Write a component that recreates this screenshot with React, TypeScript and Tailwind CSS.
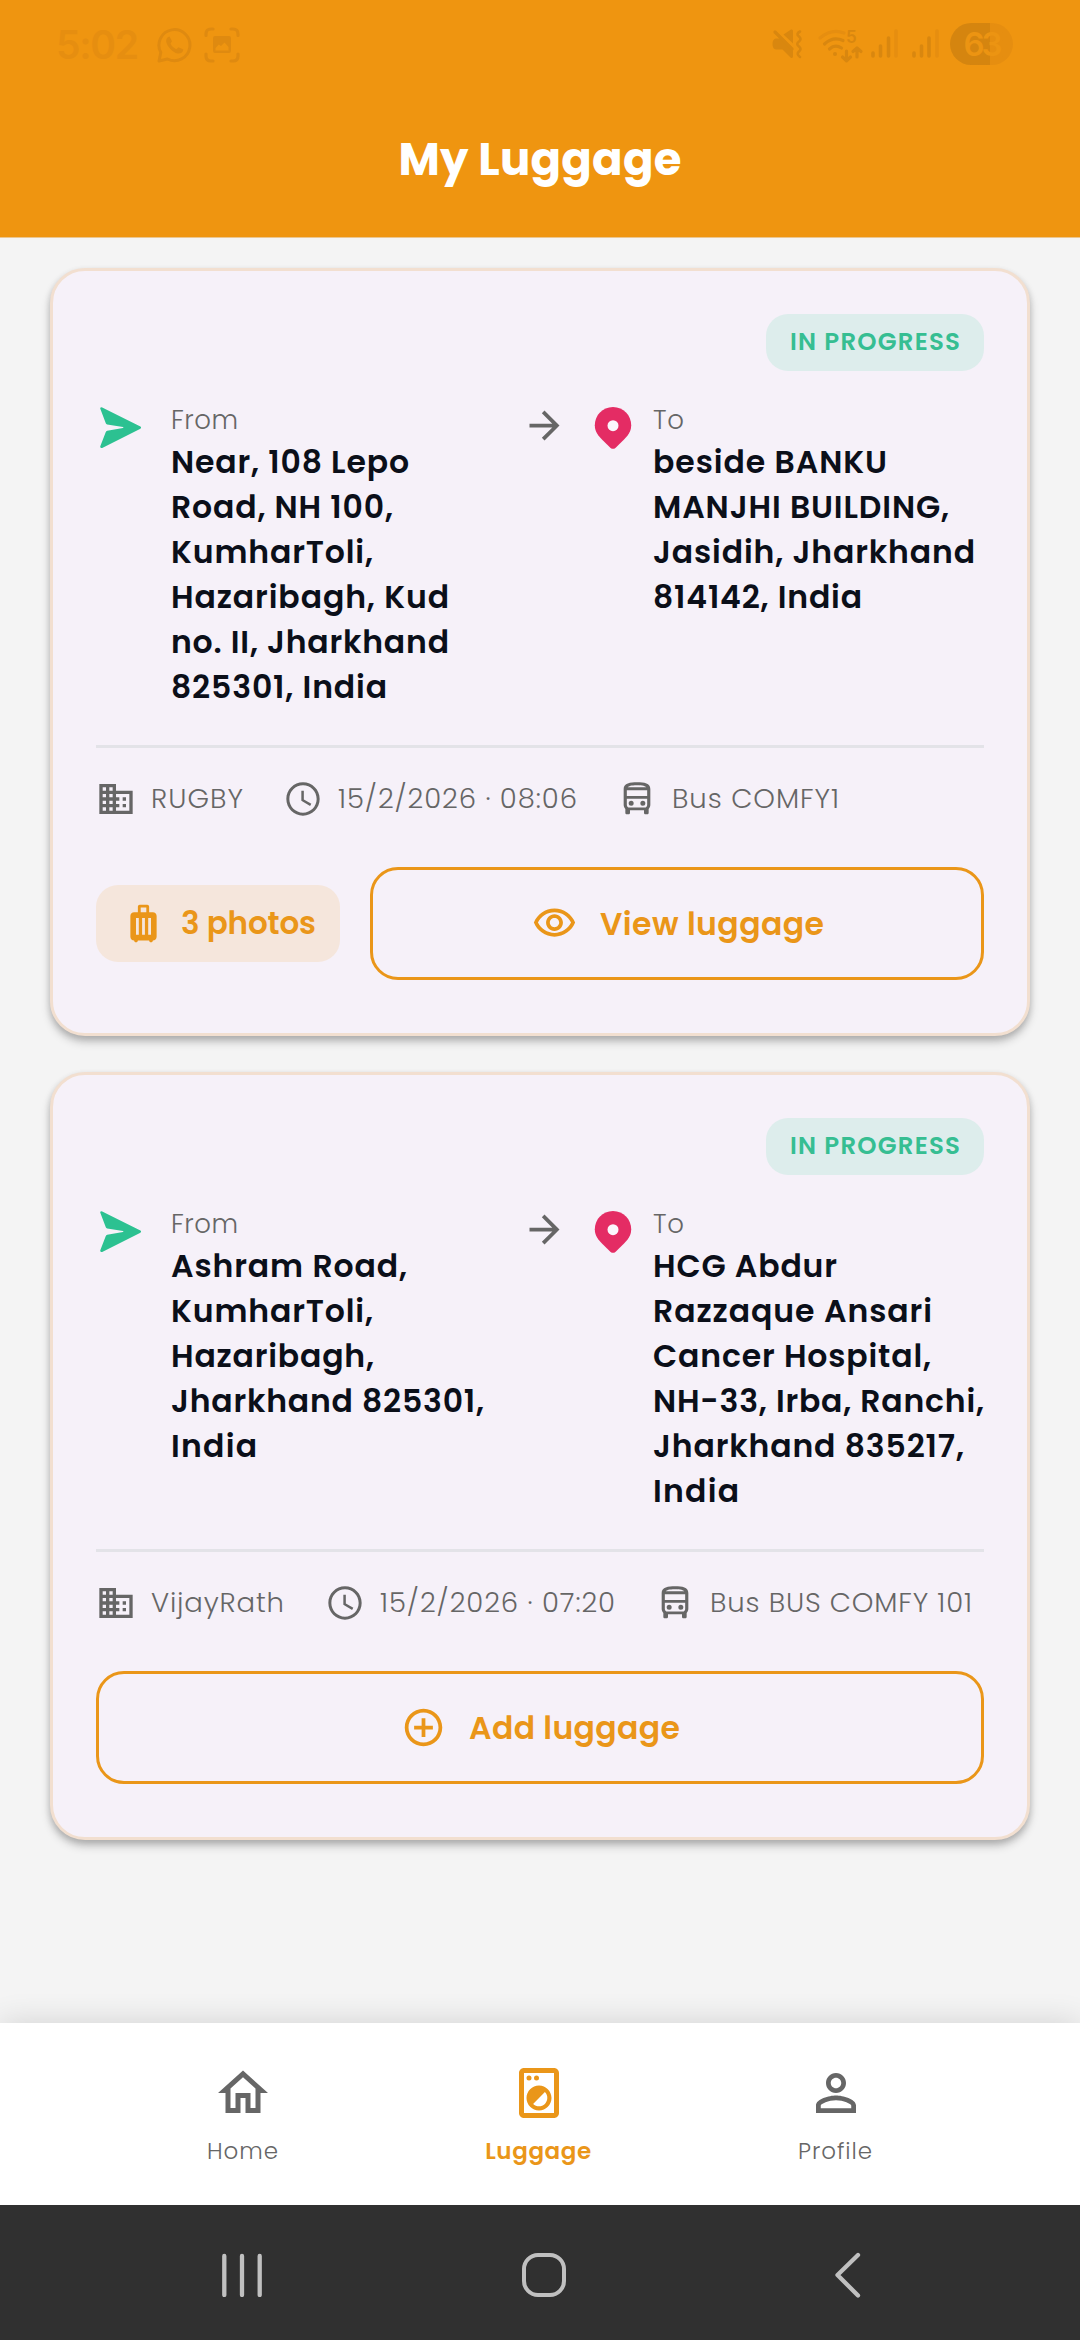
import { useLayoutEffect, useRef, useState } from "react";

/* Single line of text whose tracking is adjusted so that it spans the given width. */
function Fit({ text, width, className = "" }: { text: string; width: number; className?: string }) {
  const ref = useRef<HTMLSpanElement>(null);
  const [spacing, setSpacing] = useState(0);
  useLayoutEffect(() => {
    const el = ref.current;
    if (!el) return;
    const previous = el.style.letterSpacing;
    el.style.letterSpacing = "0px";
    const natural = el.getBoundingClientRect().width;
    el.style.letterSpacing = previous;
    setSpacing((width - natural) / (text.length - 1));
  }, [text, width]);
  return (
    <span className={`block ${className}`}>
      <span ref={ref} className="inline-block whitespace-nowrap" style={{ letterSpacing: `${spacing}px` }}>
        {text}
      </span>
    </span>
  );
}

function Icon({ d, className }: { d: string; className: string }) {
  return (
    <svg viewBox="0 0 24 24" fill="currentColor" className={`shrink-0 ${className}`}>
      <path d={d} />
    </svg>
  );
}

const icons = {
  business:
    "M12 7V3H2v18h20V7H12zM6 19H4v-2h2v2zm0-4H4v-2h2v2zm0-4H4V9h2v2zm0-4H4V5h2v2zm4 12H8v-2h2v2zm0-4H8v-2h2v2zm0-4H8V9h2v2zm0-4H8V5h2v2zm10 12h-8v-2h2v-2h-2v-2h2v-2h-2V9h8v10zm-2-8h-2v2h2v-2zm0 4h-2v2h2v-2z",
  clock:
    "M11.99 2C6.47 2 2 6.48 2 12s4.47 10 9.99 10C17.52 22 22 17.52 22 12S17.52 2 11.99 2zM12 20.200c-4.520 0-8.200-3.680-8.200-8.200S7.480 3.800 12 3.800s8.200 3.680 8.200 8.200-3.680 8.200-8.200 8.200zM12.500 7H11v6l5.250 3.150.750-1.230-4.500-2.670z",
  bus: "M12 2C8 2 4 2.500 4 6v9.500c0 .95.380 1.810 1 2.440V20.200c0 .6.400 1 1 1h.800c.6 0 1-.4 1-1V18.700h8.400v1.500c0 .6.400 1 1 1h.800c.6 0 1-.4 1-1v-2.260c.620-.63 1-1.490 1-2.440V6c0-3.500-3.580-4-8-4zm0 1.700c3.600 0 5 .5 5.600 1.300H6.400c.6-.8 2-1.300 5.600-1.300zM18.100 6.700v3.500H5.900V6.700h12.200zm0 8.700c0 1-.6 1.700-1.500 1.700H7.400c-.9 0-1.500-.7-1.500-1.700v-3.600h12.200v3.600zM8.500 13a1.500 1.500 0 1 0 0 3 1.500 1.500 0 0 0 0-3zm7 0a1.500 1.500 0 1 0 0 3 1.500 1.500 0 0 0 0-3z",
  luggage:
    "M17 6h-2V3c0-.55-.45-1-1-1h-4c-.55 0-1 .45-1 1v3H7c-1.1 0-2 .9-2 2v11c0 1.1.9 2 2 2 0 .55.45 1 1 1s1-.45 1-1h6c0 .55.45 1 1 1s1-.45 1-1c1.1 0 2-.9 2-2V8c0-1.1-.9-2-2-2zM9.500 18H8V9h1.500v9zm3.250 0h-1.500V9h1.500v9zm.750-12h-3V3.500h3V6zM16 18h-1.500V9H16v9z",
  eye: "M12 6c3.790 0 7.170 2.130 8.820 5.500C19.170 14.870 15.790 17 12 17s-7.170-2.130-8.820-5.500C4.830 8.130 8.210 6 12 6m0-2C7 4 2.730 7.110 1 11.500 2.730 15.890 7 19 12 19s9.270-3.110 11-7.500C21.270 7.110 17 4 12 4zm0 5c1.380 0 2.500 1.120 2.500 2.500S13.380 14 12 14s-2.500-1.120-2.500-2.500S10.620 9 12 9m0-2c-2.480 0-4.500 2.020-4.500 4.500S9.520 16 12 16s4.500-2.020 4.500-4.500S14.480 7 12 7z",
  add: "M13 7h-2v4H7v2h4v4h2v-4h4v-2h-4V7zm-1-5C6.480 2 2 6.480 2 12s4.480 10 10 10 10-4.480 10-10S17.520 2 12 2zm0 18c-4.410 0-8-3.590-8-8s3.590-8 8-8 8 3.590 8 8-3.590 8-8 8z",
  arrow: "M12 4l-1.410 1.410L16.170 11H4v2h12.170l-5.580 5.590L12 20l8-8z",
  home: "M12 5.690l5 4.500V18h-2v-6H9v6H7v-7.810l5-4.500M12 3L2 12h3v8h6v-6h2v6h6v-8h3L12 3z",
  laundry:
    "M18 2.010L6 2c-1.110 0-2 .89-2 2v16c0 1.110.89 2 2 2h12c1.110 0 2-.89 2-2V4c0-1.110-.89-1.990-2-1.990zM18 20L6 19.990V4h12v16zM8 5a1 1 0 1 0 0 2 1 1 0 0 0 0-2zm3 0a1 1 0 1 0 0 2 1 1 0 0 0 0-2zm1 14c2.760 0 5-2.240 5-5s-2.240-5-5-5-5 2.240-5 5 2.240 5 5 5zm2.360-7.360c1.300 1.300 1.300 3.420 0 4.720s-3.420 1.300-4.720 0l4.720-4.720z",
  person:
    "M12 5.900c1.160 0 2.100.94 2.100 2.100s-.94 2.100-2.100 2.100S9.900 9.160 9.900 8s.94-2.100 2.100-2.100m0 9c2.970 0 6.100 1.460 6.100 2.100v1.100H5.900V17c0-.64 3.130-2.100 6.100-2.100M12 4C9.790 4 8 5.790 8 8s1.790 4 4 4 4-1.790 4-4-1.790-4-4-4zm0 9c-2.670 0-8 1.340-8 4v3h16v-3c0-2.660-5.330-4-8-4z",
};

type Line = [string, number];

interface Trip {
  from: Line[];
  to: Line[];
  company: Line;
  time: Line;
  bus: Line;
  companyCell: string;
  timeCell: string;
  photos?: string;
}

const trips: Trip[] = [
  {
    from: [
      ["Near, 108 Lepo", 238],
      ["Road, NH 100,", 222],
      ["KumharToli,", 202],
      ["Hazaribagh, Kud", 278],
      ["no. II, Jharkhand", 278],
      ["825301, India", 216],
    ],
    to: [
      ["beside BANKU", 234],
      ["MANJHI BUILDING,", 296],
      ["Jasidih, Jharkhand", 322],
      ["814142, India", 209],
    ],
    company: ["RUGBY", 92],
    time: ["15/2/2026 · 08:06", 239],
    bus: ["Bus COMFY1", 167],
    companyCell: "w-[187px]",
    timeCell: "w-[334px]",
    photos: "3 photos",
  },
  {
    from: [
      ["Ashram Road,", 236],
      ["KumharToli,", 202],
      ["Hazaribagh,", 203],
      ["Jharkhand 825301,", 313],
      ["India", 86],
    ],
    to: [
      ["HCG Abdur", 184],
      ["Razzaque Ansari", 279],
      ["Cancer Hospital,", 278],
      ["NH-33, Irba, Ranchi,", 331],
      ["Jharkhand 835217,", 311],
      ["India", 86],
    ],
    company: ["VijayRath", 133],
    time: ["15/2/2026 · 07:20", 235],
    bus: ["Bus BUS COMFY 101", 262],
    companyCell: "w-[229px]",
    timeCell: "w-[330px]",
  },
];

function SendIcon() {
  return (
    <svg viewBox="0 0 42 42" className="mt-[7px] ml-1 h-[42px] w-[42px]" fill="#2CC191">
      <path d="M0.200 1.600Q0.400 -0.300 2.200 0.400L40.400 19.400Q41.800 20.600 40.400 21.700L2.200 41Q0.300 41.500 0.200 39.600L5.800 25Q6.100 24 7.200 23.800L23 21.100Q23.800 20.600 23 20.100L7.200 17.400Q6.100 17.200 5.800 16.200Z" />
    </svg>
  );
}

function PinIcon() {
  return (
    <svg viewBox="0 0 38 42" className="mt-[7px] ml-px h-[42px] w-[38px]">
      <path
        d="M19 0C8.500 0 .8 8.300 .8 18.300C.8 25 4.500 29 8.200 32.800L16.600 40.900Q19 42.700 21.400 40.900L29.800 32.800C33.500 29 37.200 25 37.200 18.300C37.200 8.300 29.500 0 19 0Z"
        fill="#E42C64"
      />
      <circle cx="19" cy="18.700" r="5.500" fill="#FBF6FC" />
    </svg>
  );
}

function Place({ label, labelWidth, lines, className }: { label: string; labelWidth: number; lines: Line[]; className: string }) {
  return (
    <div className={`pt-px ${className}`}>
      <Fit text={label} width={labelWidth} className="h-[39px] text-[26px] leading-[39px] font-light text-[#666666]" />
      {lines.map(([text, width]) => (
        <Fit key={text} text={text} width={width} className="h-[45px] text-[31.500px] leading-[45px] font-semibold text-[#0B0F19]" />
      ))}
    </div>
  );
}

function Meta({ icon, line, className = "" }: { icon: string; line: Line; className?: string }) {
  return (
    <div className={`flex h-10 items-center gap-[15px] text-[#666666] ${className}`}>
      <Icon d={icon} className="h-10 w-10" />
      <Fit text={line[0]} width={line[1]} className="text-[27.500px] leading-10 font-light" />
    </div>
  );
}

function ActionButton({ icon, text, width, className }: { icon: string; text: string; width: number; className: string }) {
  return (
    <button className={`flex h-[113px] items-center rounded-[28px] border-[3px] border-[#EA9619] text-[#EA9619] ${className}`}>
      <Icon d={icon} className="h-[45px] w-[45px]" />
      <Fit text={text} width={width} className="ml-[23px] pt-px text-[31.500px] leading-10 font-semibold" />
    </button>
  );
}

function TripCard({ trip }: { trip: Trip }) {
  return (
    <article className="h-[768px] rounded-[35px] border-[3px] border-[#F2DFD0] bg-[#F6F1F9] px-[43px] pt-[43px] shadow-[0_6px_10px_rgba(0,0,0,0.200),0_3px_6px_rgba(0,0,0,0.140)]">
      <div className="flex justify-end">
        <div className="flex h-[57px] w-[218px] items-center rounded-[22px] bg-[#DDEDEC] pb-[2px] pl-6 text-[#36BE92]">
          <Fit text="IN PROGRESS" width={170} className="text-[24.500px] leading-8 font-semibold" />
        </div>
      </div>
      <div className="mt-[29px] flex h-[309px]">
        <div className="w-[75px]">
          <SendIcon />
        </div>
        <Place label="From" labelWidth={67} lines={trip.from} className="w-[351px]" />
        <Icon d={icons.arrow} className="mt-[3px] mr-[26px] h-[45px] w-[45px] text-[#666666]" />
        <div className="w-[60px]">
          <PinIcon />
        </div>
        <Place label="To" labelWidth={31} lines={trip.to} className="w-[330px]" />
      </div>
      <div className="mt-9 h-[3px] bg-[#E3E3E8]" />
      <div className="mt-[31px] flex">
        <Meta icon={icons.business} line={trip.company} className={trip.companyCell} />
        <Meta icon={icons.clock} line={trip.time} className={trip.timeCell} />
        <Meta icon={icons.bus} line={trip.bus} />
      </div>
      <div className="mt-12 flex items-center">
        {trip.photos ? (
          <>
            <div className="flex h-[77px] w-[244px] items-center rounded-[22px] bg-[#F5E6DC] pl-[25px] text-[#EA9619]">
              <Icon d={icons.luggage} className="h-[45px] w-[45px]" />
              <Fit text={trip.photos} width={135} className="ml-[15px] pb-px text-[31px] leading-10 font-semibold" />
            </div>
            <ActionButton icon={icons.eye} text="View luggage" width={224} className="ml-[30px] w-[614px] pl-[159px]" />
          </>
        ) : (
          <ActionButton icon={icons.add} text="Add luggage" width={211} className="w-full pl-[302px]" />
        )}
      </div>
    </article>
  );
}

function StatusBar() {
  return (
    <div className="flex h-[88px] pl-14 font-['Inter',sans-serif]">
      <div className="flex h-[88px] w-[101px] items-center">
        <Fit text="5:02" width={83} className="text-[39px] leading-none font-semibold text-[#E68E10]" />
      </div>
      <svg viewBox="0 0 36 36" className="mt-[27px] h-9 w-9" fill="none" stroke="#DF8A10" strokeWidth="3">
        <path d="M2 34L3.800 25.500A15.500 15.500 0 1 1 10.500 32Z" strokeLinejoin="round" />
        <path
          d="M12.500 9.500C10.500 10 9 11.500 9.200 14.500C9.800 19 15.500 25.500 20.500 26.500C23.500 27 26 25.500 26.400 22.500L21.500 20.200L19.300 22.300C16.500 21 14.500 18.800 13.500 16.600L15 14.200Z"
          fill="#DF8A10"
          stroke="none"
        />
      </svg>
      <svg viewBox="0 0 36 36" className="mt-[27px] ml-[11px] h-9 w-9" fill="none" stroke="#DF8A10" strokeWidth="3.200" strokeLinecap="round">
        <path d="M2 8.500V7Q2 2 7 2H9M27 2H29Q34 2 34 7V8.500M34 27V29Q34 34 29 34H27M9 34H7Q2 34 2 29V27" />
        <path d="M11 9H25Q27 9 27 11V24Q27 26 25 26H11Q9 26 9 24V11Q9 9 11 9ZM11.500 23.500H24.500V20L20.500 15.500L17 19L14.800 17.500L11.500 21Z" fill="#DF8A10" fillRule="evenodd" stroke="none" />
      </svg>
      <svg viewBox="0 0 170 44" className="mt-[22px] ml-[531px] h-11 w-[170px]" fill="none" stroke="#D9870F" strokeWidth="3.200" strokeLinecap="round" strokeLinejoin="round">
        <path d="M12.500 12.500L20 7.500Q22 7 22 9V21.500Z" fill="#D9870F" stroke="none" />
        <path d="M5 16.500H10L22 28.500V34Q22 37 19.500 35.500L11.500 27.500H5Q1.500 27 1.500 22Q1.500 17 5 16.500Z" fill="#D9870F" stroke="none" />
        <path d="M4 10L21 27" />
        <path d="M29 9.500Q24.500 12 28 14.500Q31 17 28 19.500Q24.500 22 28 24.500Q31 27 28 29.500Q25 32 29 35" strokeWidth="2.600" />
        <path d="M49 16Q61 6 73 11" stroke="#E68E10" />
        <path d="M53.500 22Q62 14 72 18.500M58.500 27Q64 22 70.500 26M75.500 29V38M71.500 35L75.500 38.800L79.500 35M86 35V27M82 29.500L86 26L90 29.500" />
        <circle cx="64" cy="32" r="2" fill="#D9870F" stroke="none" />
        <path d="M102 31V34M109.500 24V34M117.500 16V34M143 31V34M150.500 24V34M158 16V34" strokeWidth="3.600" />
        <path d="M125 9V34M166 9V34" stroke="#E68E10" strokeWidth="3.600" />
        <text x="75" y="21" fill="#D9870F" stroke="none" className="text-[17px] font-semibold">
          5
        </text>
      </svg>
      <div className="mt-[23px] ml-[9px] flex h-[42px] w-[63px] items-center justify-center rounded-full bg-linear-to-r from-[#D5850F] from-[63%] to-[#E68E10] to-[63%]">
        <Fit text="63" width={39} className="text-[33px] leading-none font-semibold text-[#EC9412]" />
      </div>
    </div>
  );
}

function Tab({ icon, text, width, className }: { icon: string; text: string; width: number; className: string }) {
  return (
    <div className={`flex flex-col items-center ${className}`}>
      <Icon d={icon} className="h-[60px] w-[60px]" />
      <Fit text={text} width={width} className="mt-3 text-[23px] leading-[32px]" />
    </div>
  );
}

export default function App() {
  return (
    <div className="flex h-[2340px] w-[1080px] flex-col overflow-hidden bg-[#F4F4F4] font-['Poppins','Inter',sans-serif]">
      <header className="h-[238px] border-b border-[#EBC690] bg-[#EF9510]">
        <StatusBar />
        <h1 className="flex h-36 justify-center text-white">
          <Fit text="My Luggage" width={283} className="pt-12 text-[45px] leading-[48px] font-bold" />
        </h1>
      </header>
      <main className="flex grow flex-col gap-9 px-[50px] pt-[30px]">
        {trips.map((trip) => (
          <TripCard key={trip.time[0]} trip={trip} />
        ))}
      </main>
      <nav className="flex h-[182px] bg-white pt-10 pl-[93px] text-[#666666] shadow-[0_0_30px_rgba(0,0,0,0.140)]">
        <Tab icon={icons.home} text="Home" width={71} className="w-[300px] font-light" />
        <Tab icon={icons.laundry} text="Luggage" width={106} className="w-[291px] font-semibold text-[#EA9619]" />
        <Tab icon={icons.person} text="Profile" width={74} className="w-[303px] font-light" />
      </nav>
      <footer className="flex h-[135px] bg-[#303030] pt-12 pl-[220px]">
        <svg viewBox="0 0 44 44" className="h-11 w-11" stroke="#C0C0C0" strokeWidth="4.300" strokeLinecap="round">
          <path d="M4.300 3V42M22 3V42M39.700 3V42" />
        </svg>
        <div className="ml-[258px] h-11 w-11 rounded-2xl border-[4px] border-[#C0C0C0]" />
        <svg viewBox="0 0 28 46" className="-mt-px ml-[267px] h-[46px] w-7" fill="none" stroke="#C0C0C0" strokeWidth="4.300" strokeLinecap="round" strokeLinejoin="round">
          <path d="M25 3L4.500 23L25 43.500" />
        </svg>
      </footer>
    </div>
  );
}
